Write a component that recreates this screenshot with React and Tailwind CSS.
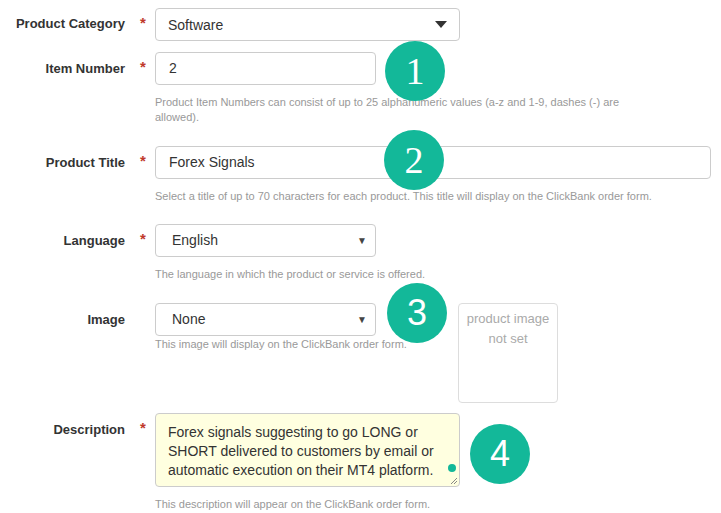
import React from "react";

const Star = () => (
  <span className="text-[#c0392b] text-[15px] leading-none font-bold pt-[7px] pl-[15px]">*</span>
);

function Label({ children, top = "pt-[8px]" }) {
  return (
    <div className={`text-right text-[13px] font-bold text-[#333] ${top} leading-[18px]`}>{children}</div>
  );
}

function Help({ children, className = "" }) {
  return <div className={`text-[11px] leading-[15px] text-[#999] ${className}`}>{children}</div>;
}

function Badge({ n, className, serif }) {
  return (
    <div
      className={`absolute w-[60px] h-[60px] rounded-full bg-[#13b899] text-white flex items-center justify-center ${className}`}
    >
      <span
        className={
          serif
            ? "text-[38px] leading-none [font-family:'Liberation_Serif',serif]"
            : "text-[36px] leading-none font-light [font-family:'Liberation_Sans',Arial,sans-serif]"
        }
      >
        {n}
      </span>
    </div>
  );
}

function SmallSelect({ value }) {
  return (
    <div className="w-[221px] h-[33px] border border-[#ccc] rounded-[4px] bg-white flex items-center pl-[16px] pr-[8px] text-[14px] text-[#333]">
      <span className="flex-1">{value}</span>
      <span className="text-[10px] text-[#444]">▼</span>
    </div>
  );
}

export default function App() {
  return (
    <div className="relative w-[721px] h-[513px] bg-white overflow-hidden [font-family:'Liberation_Sans',Arial,sans-serif]">
      <div className="flex flex-col pt-[8px]">
        {/* Product Category */}
        <div className="grid grid-cols-[125px_30px_1fr]">
          <Label top="pt-[7px]">Product Category</Label>
          <Star />
          <div className="w-[305px] h-[33px] border border-[#ccc] rounded-[4px] bg-white flex items-center pl-[12px] pr-[12px] text-[14px] text-[#333]">
            <span className="flex-1 pt-[1px]">Software</span>
            <svg width="12" height="7" viewBox="0 0 12 7">
              <path d="M0 0 L12 0 L6 7 Z" fill="#333" />
            </svg>
          </div>
        </div>

        {/* Item Number */}
        <div className="grid grid-cols-[125px_30px_1fr] mt-[11px]">
          <Label>Item Number</Label>
          <Star />
          <div>
            <div className="w-[221px] h-[33px] border border-[#ccc] rounded-[4px] bg-white flex items-center pl-[13px] text-[14px] text-[#333]">
              2
            </div>
            <Help className="mt-[10px] w-[480px]">
              Product Item Numbers can consist of up to 25 alphanumeric values (a-z and 1-9, dashes (-) are allowed).
            </Help>
          </div>
        </div>

        {/* Product Title */}
        <div className="grid grid-cols-[125px_30px_1fr] mt-[21px]">
          <Label>Product Title</Label>
          <Star />
          <div>
            <div className="w-[556px] h-[33px] border border-[#ccc] rounded-[4px] bg-white flex items-center pl-[13px] text-[14px] text-[#333]">
              Forex Signals
            </div>
            <Help className="mt-[10px]">
              Select a title of up to 70 characters for each product. This title will display on the ClickBank order form.
            </Help>
          </div>
        </div>

        {/* Language */}
        <div className="grid grid-cols-[125px_30px_1fr] mt-[20px]">
          <Label>Language</Label>
          <Star />
          <div>
            <SmallSelect value="English" />
            <Help className="mt-[10px]">The language in which the product or service is offered.</Help>
          </div>
        </div>

        {/* Image */}
        <div className="grid grid-cols-[125px_30px_1fr] mt-[21px]">
          <Label>Image</Label>
          <div />
          <div className="flex">
            <div className="w-[221px] shrink-0">
              <SmallSelect value="None" />
              <Help className="mt-[1px] whitespace-nowrap">This image will display on the ClickBank order form.</Help>
            </div>
            <div className="ml-[82px] w-[100px] h-[100px] border border-[#ddd] rounded-[4px] text-center text-[13px] leading-[20px] text-[#aaa] pt-[5px]">
              product image
              <br />
              not set
            </div>
          </div>
        </div>

        {/* Description */}
        <div className="grid grid-cols-[125px_30px_1fr] mt-[10px]">
          <Label>Description</Label>
          <Star />
          <div>
            <div className="relative w-[305px] h-[74px] border border-[#ccc] rounded-[4px] bg-[#ffffe0] pl-[12px] pt-[9px] text-[14px] leading-[19px] text-[#333]">
              Forex signals suggesting to go LONG or
              <br />
              SHORT delivered to customers by email or
              <br />
              automatic execution on their MT4 platform.
              <span className="absolute right-[3px] top-[50px] w-[8px] h-[8px] rounded-full bg-[#13b899]" />
              <svg className="absolute right-[1px] bottom-[1px]" width="8" height="8" viewBox="0 0 8 8">
                <path d="M7 1 L1 7 M7 4 L4 7" stroke="#888" strokeWidth="1" />
              </svg>
            </div>
            <Help className="mt-[10px]">This description will appear on the ClickBank order form.</Help>
          </div>
        </div>
      </div>

      <Badge n="1" serif className="left-[385px] top-[41px]" />
      <Badge n="2" serif className="left-[384px] top-[130px]" />
      <Badge n="3" className="left-[387px] top-[283px]" />
      <Badge n="4" className="left-[470px] top-[424px]" />
    </div>
  );
}
